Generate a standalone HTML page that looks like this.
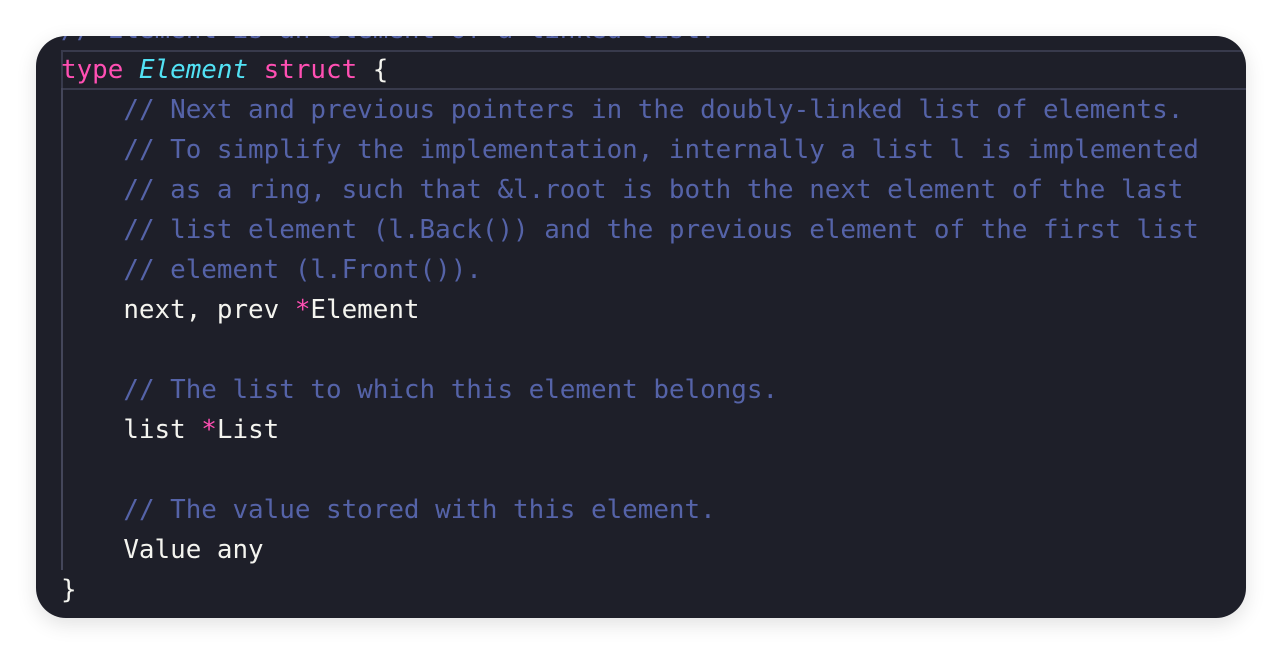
<!DOCTYPE html>
<html><head><style>
html,body{margin:0;padding:0;background:#fff;width:1282px;height:654px;overflow:hidden}
.card{position:absolute;left:36px;top:36px;width:1210px;height:582px;background:#1e1f29;border-radius:30px;overflow:hidden;box-shadow:0 6px 20px rgba(0,0,0,0.12)}
.hl{position:absolute;left:25px;top:14px;width:1200px;height:36px;border:2px solid #383a4c;border-right:none}
.guide{position:absolute;left:25px;top:52px;width:2px;height:482px;background:#44465a}
pre{position:absolute;left:25px;top:-26px;margin:0;font-family:"DejaVu Sans Mono","Liberation Mono",monospace;font-size:25.9px;line-height:40px;color:#f4f4ef;white-space:pre}
.k{color:#ff4fb3}.t{color:#52e2f5;font-style:italic}.c{color:#5563a8}
</style></head><body>
<div class="card">
<div class="hl"></div><div class="guide"></div>
<pre><span class="c">// Element is an element of a linked list.</span>
<span class="k">type</span> <span class="t">Element</span> <span class="k">struct</span> {
    <span class="c">// Next and previous pointers in the doubly-linked list of elements.</span>
    <span class="c">// To simplify the implementation, internally a list l is implemented</span>
    <span class="c">// as a ring, such that &amp;l.root is both the next element of the last</span>
    <span class="c">// list element (l.Back()) and the previous element of the first list</span>
    <span class="c">// element (l.Front()).</span>
    next, prev <span class="k">*</span>Element

    <span class="c">// The list to which this element belongs.</span>
    list <span class="k">*</span>List

    <span class="c">// The value stored with this element.</span>
    Value any
}</pre>
</div>
</body></html>
